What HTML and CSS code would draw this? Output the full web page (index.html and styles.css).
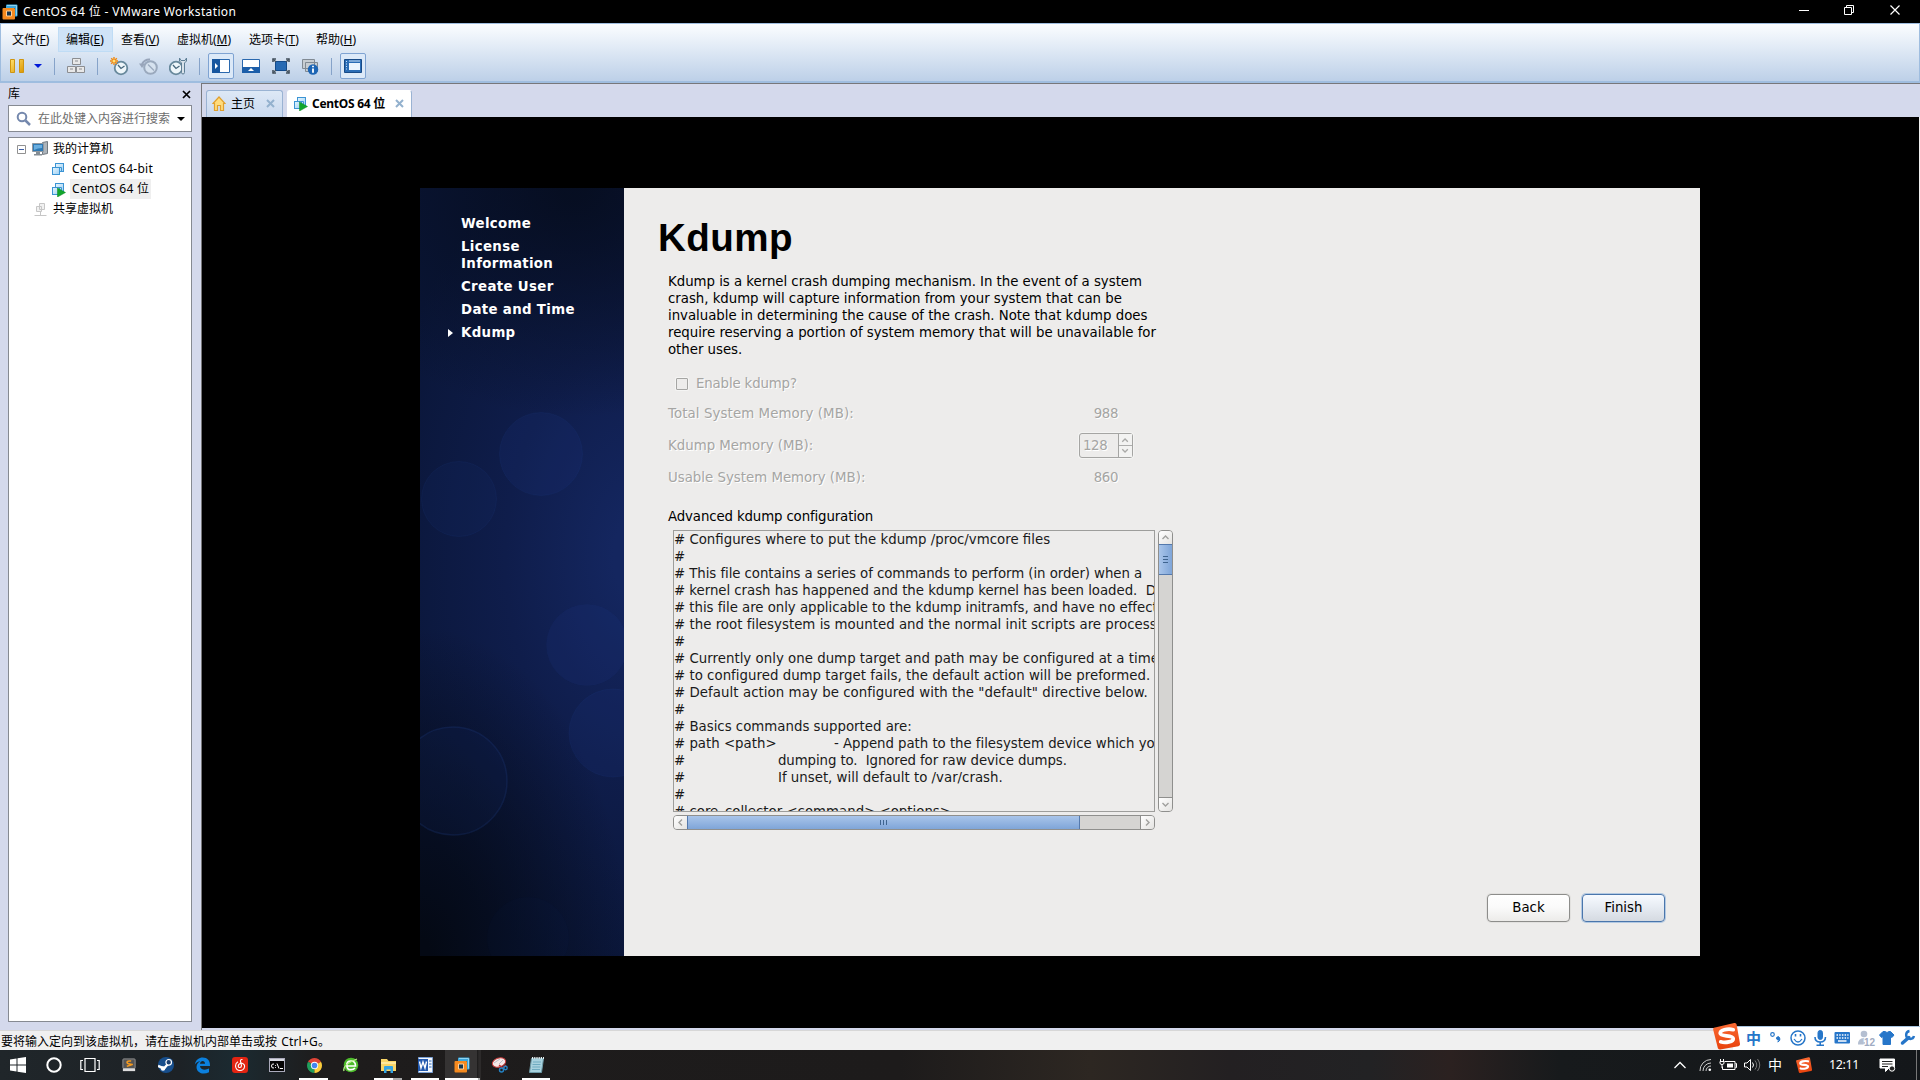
FILE: index.html
```html
<!DOCTYPE html>
<html lang="zh-CN">
<head>
<meta charset="utf-8">
<title>CentOS 64 位 - VMware Workstation</title>
<link rel="stylesheet" href="styles.css">
</head>
<body>
<svg class="defs" width="0" height="0">
  <defs>
    <linearGradient id="box" x1="0" y1="0" x2="1" y2="1"><stop offset="0" stop-color="#e6f6ff"/><stop offset="1" stop-color="#9fd0f2"/></linearGradient>
    <linearGradient id="gold" x1="0" y1="0" x2="1" y2="1"><stop offset="0" stop-color="#ffe070"/><stop offset="1" stop-color="#dc9700"/></linearGradient>
    <linearGradient id="red" x1="0" y1="0" x2="0" y2="1"><stop offset="0" stop-color="#fa6a33"/><stop offset="1" stop-color="#e8420c"/></linearGradient>
    <symbol id="vm" viewBox="0 0 15 15">
      <rect x="4.5" y="1.5" width="8" height="8" fill="url(#box)" stroke="#3c94d4"/>
      <rect x="1.5" y="5.500" width="7" height="7" fill="url(#box)" stroke="#3c94d4"/>
      <path d="M6.500 5.500h4v4" fill="none" stroke="#3c94d4"/>
    </symbol>
    <symbol id="vmrun" viewBox="0 0 15 15">
      <use href="#vm" width="15" height="15"/>
      <path d="M6.500 6v9l8-4.500z" fill="#12a62c" stroke="#0a8a20" stroke-width=".5"/>
    </symbol>
    <symbol id="vmware" viewBox="0 0 16 16">
      <path d="M4 1.500q0-1 1-1h9.500q1 0 1 1v10q0 1-1 1H13V4H4z" fill="#3ba6dc"/>
      <path d="M5 1.500h9.500v10" fill="none" stroke="#8fd4f2"/>
      <path d="M.5 5Q.5 4 1.500 4H12q1 0 1 1v9.500q0 1-1 1H1.500q-1 0-1-1z" fill="#f58a1f"/>
      <path d="M4.500 7h5v5h-5z" fill="#16364f" stroke="#ffd09a"/>
    </symbol>
    <symbol id="sogou" viewBox="0 0 28 28">
      <path d="M1 5.500L22 .5q2-.5 2.500 1.500L28 22q.2 2-1.700 2.500L7.500 28q-2 .3-2.500-1.500L.2 7.500Q0 5.700 1 5.500z" fill="url(#red)"/>
      <path d="M21 7.500C15 6 7 8 7.500 11.500c.5 3.300 13 1.300 13.500 5 .4 3.500-8 5-13 3.500" fill="none" stroke="#fff" stroke-width="3.800" stroke-linecap="round"/>
    </symbol>
    <symbol id="clock" viewBox="0 0 20 20">
      <circle cx="12" cy="12" r="6.300" fill="#eef6fa" stroke="#68899c" stroke-width="1.800"/>
      <path d="M9 9l3 3.500L15.500 10" fill="none" stroke="#46677c" stroke-width="1.300"/>
    </symbol>
  </defs>
</svg>

<header class="titlebar">
  <svg width="16" height="16"><use href="#vmware"/></svg>
  <h1>CentOS 64 位 - VMware Workstation</h1>
  <svg class="winbtns" width="110" height="23" viewBox="0 0 110 23" fill="none" stroke="#fff">
    <path d="M7 10.500h10M52.500 7.500h7v7h-7zM54.500 7.500v-2h7v7h-2" />
    <path d="M98.500 5.500l9 9M107.500 5.500l-9 9" stroke-width="1.200"/>
  </svg>
</header>

<div class="chrome">
  <nav class="menu">
    <span>文件(<u>F</u>)</span><span class="hot">编辑(<u>E</u>)</span><span>查看(<u>V</u>)</span><span>虚拟机(<u>M</u>)</span><span>选项卡(<u>T</u>)</span><span>帮助(<u>H</u>)</span>
  </nav>
  <div class="tools">
    <svg class="t-pause" width="34" height="20" viewBox="0 0 34 20"><path d="M1.500 3.500h4v13h-4zM10.500 3.500h4v13h-4z" fill="url(#gold)" stroke="#cf9510"/><path d="M25 8h8l-4 4z" fill="#0018d8"/></svg>
    <i class="sep"></i>
    <svg class="t-a" width="20" height="20" viewBox="0 0 20 20" fill="#e8e8e8" stroke="#8b8d91"><path d="M6.500 2.500h8v6h-8zM1.500 10.500h8v6h-8zM10.500 10.500h8v6h-8z"/><path d="M9 5h3M4 13h3M13 13h3" fill="none"/></svg>
    <i class="sep"></i>
    <svg class="t-a" width="20" height="20" viewBox="0 0 20 20"><use href="#clock" width="20" height="20"/><path d="M5 1v8M1 5h8M2.200 2.200l5.600 5.600M7.800 2.200L2.200 7.800" stroke="#f08810" stroke-width="1.400"/><circle cx="5" cy="5" r="1.500" fill="#ffe27a"/></svg>
    <svg class="t-b" width="20" height="20" viewBox="0 0 20 20" fill="none" stroke="#9aa9bd" stroke-width="2"><circle cx="11.500" cy="11.500" r="6.300" fill="#d6e2ef"/><path d="M9 8.500l3 3 3 3" stroke-width="1.300"/><path d="M3 8q3-5 8-4.500" stroke="#98a5ba"/><path d="M0 7.500h6L3 12z" fill="#98a5ba" stroke="none"/></svg>
    <svg class="t-b" width="20" height="20" viewBox="0 0 20 20"><use href="#clock" x="-5" y="0" width="20" height="20"/><path d="M10.500 2v3l2 2v9.500q0 1.500 1.500 1.500t1.500-1.500V7l2-2V2l-1.500 2.500h-4z" fill="#d8e2ea" stroke="#5e7e94"/></svg>
    <i class="sep"></i>
    <span class="on first"><svg width="20" height="16" viewBox="0 0 20 16"><path d="M1.500 1.500h17v13h-17z" fill="#fff" stroke="#2a68ae"/><path d="M1 1h8v14H1z" fill="#17569f"/><path d="M4 5v6l3-3z" fill="#fff"/></svg></span>
    <svg class="t-c" width="20" height="16" viewBox="0 0 20 16"><path d="M1.500 1.500h17v13h-17z" fill="#fff" stroke="#2a68ae"/><path d="M1 9h18v6H1z" fill="#1c5ea9"/><path d="M7 13h6l-3-3z" fill="#fff"/></svg>
    <svg class="t-b" width="20" height="20" viewBox="0 0 20 20"><path d="M4.500 5.500h11v9h-11z" fill="#276ab3" stroke="#124b8d"/><path d="M2 6V3h3M15 3h3v3M2 14v3h3M15 17h3v-3" fill="none" stroke="#46535f" stroke-width="1.600"/><path d="M2 3l3 3M18 3l-3 3M2 17l3-3M18 17l-3-3" stroke="#46535f" stroke-width="1.200"/></svg>
    <svg class="t-b" width="20" height="20" viewBox="0 0 20 20"><path d="M1.500 3.500h12v9h-12zM4.500 6.500h12v9h-12z" fill="#c7cdd2" stroke="#818a93"/><circle cx="12" cy="13.500" r="5.200" fill="#1d65b4"/><path d="M12 12.500v4.300M12 9.800v1.500" stroke="#fff" stroke-width="1.800"/></svg>
    <i class="sep"></i>
    <span class="on"><svg width="20" height="16" viewBox="0 0 20 16"><path d="M1.500 1.500h17v13h-17z" fill="#2a6cb5" stroke="#174a87"/><path d="M6 5h11v7H6z" fill="#eaf4ff"/><path d="M3 3.500h1M3 6h1M3 8.500h1M3 11h1M6 3h11" stroke="#cfe4fb"/></svg></span>
  </div>
</div>

<main>
  <aside class="library">
    <div class="lib-head"><span>库</span><svg width="9" height="9" viewBox="0 0 9 9"><path d="M1 1l7 7M8 1L1 8" stroke="#000" stroke-width="1.700"/></svg></div>
    <div class="search">
      <svg width="16" height="16" viewBox="0 0 16 16" fill="none" stroke="#7488ad"><circle cx="6" cy="6" r="4.300" stroke-width="2"/><path d="M9.500 9.500l4.500 4.500" stroke-width="2.500"/></svg>
      <span>在此处键入内容进行搜索</span><i></i>
    </div>
    <div class="tree">
      <div class="row r0"><svg class="minus" width="9" height="9" viewBox="0 0 9 9"><path d="M.5.5h8v8h-8z" fill="#fff" stroke="#919191"/><path d="M2 4.500h5" stroke="#3d5fa8"/></svg>
        <svg width="17" height="16" viewBox="0 0 17 16"><path d="M10.500 1.500l5-1v12l-5 1z" fill="#aeb5bb" stroke="#737b82"/><path d="M.5 2.500h11v8H.5z" fill="#2f7ab5" stroke="#9098a0"/><path d="M2 4h8v3q-4 0-8 2z" fill="#69aee0"/><path d="M4 11h4v2h2v1.500H2V13h2z" fill="#858d94"/></svg><span>我的计算机</span></div>
      <div class="row r1"><svg width="15" height="15"><use href="#vm"/></svg><span class="ls">CentOS 64-bit</span></div>
      <div class="row r1"><svg width="15" height="15"><use href="#vmrun"/></svg><span class="sel">CentOS 64 位</span></div>
      <div class="row r2"><svg width="13" height="15" viewBox="0 0 13 15" fill="#f1f1f1" stroke="#c6c6c6"><path d="M5.500 1.500h5v6h-5zM2.500 4.500h5v5h-5zM6.500 10v3M.5 13.500h12"/></svg><span>共享虚拟机</span></div>
    </div>
  </aside>

  <section class="work">
    <div class="tabs">
      <div class="tab home"><svg width="14" height="15" viewBox="0 0 14 15"><path d="M1 7.500L7 1l6 6.500h-1.500v7h-3v-5h-3v5h-3v-7z" fill="#ffdc7c" stroke="#e0a02e" stroke-width="1.200"/></svg><span>主页</span><svg class="x" width="9" height="9" viewBox="0 0 9 9"><path d="M1 1l7 7M8 1L1 8" stroke="#93b1ce" stroke-width="2"/></svg></div>
      <div class="tab active"><svg width="15" height="15"><use href="#vmrun"/></svg><b>CentOS 64 位</b><svg class="x" width="9" height="9" viewBox="0 0 9 9"><path d="M1 1l7 7M8 1L1 8" stroke="#93b1ce" stroke-width="2"/></svg></div>
    </div>
    <div class="screen">
      <div class="guest">
        <div class="steps">
          <svg class="bokeh" width="204" height="768" viewBox="0 0 204 768" fill="#203a86" stroke="#2a4a9c">
            <g fill-opacity=".16" stroke-opacity=".1"><circle cx="121" cy="266" r="41.500"/><circle cx="39" cy="311" r="37.500" fill-opacity=".1"/><circle cx="167" cy="457" r="40.500" stroke-opacity=".04"/><circle cx="193" cy="545" r="44"/><circle cx="33" cy="593" r="54" fill-opacity=".1" stroke-opacity=".2" stroke-width="1.500"/><circle cx="108" cy="750" r="41" fill-opacity=".04" stroke="none"/></g>
          </svg>
          <ul><li>Welcome</li><li>License<br>Information</li><li>Create User</li><li>Date and Time</li><li class="cur">Kdump</li></ul>
        </div>
        <div class="page">
          <h2>Kdump</h2>
          <div class="body">
            <p>Kdump is a kernel crash dumping mechanism. In the event of a system<br>crash, kdump will capture information from your system that can be<br>invaluable in determining the cause of the crash. Note that kdump does<br>require reserving a portion of system memory that will be unavailable for<br>other uses.</p>
            <label class="dis check"><i></i>Enable kdump?</label>
            <div class="dis mem m1"><span>Total System Memory (MB):</span><em>988</em></div>
            <div class="dis mem m2"><span>Kdump Memory (MB):</span>
              <div class="spin"><b>128</b><svg width="14" height="23" viewBox="0 0 14 23" fill="none" stroke="#a9a9a7"><path d="M0 11.500h14"/><path d="M3.500 7.500l3-3 3 3M3.500 15.500l3 3 3-3" stroke-width="1.400"/></svg></div></div>
            <div class="dis mem m3"><span>Usable System Memory (MB):</span><em>860</em></div>
            <div class="adv">Advanced kdump configuration</div>
            <div class="editor">
<pre class="text"># Configures where to put the kdump /proc/vmcore files
#
<span class="n2"># This file contains a series of commands to perform (in order) when a</span>
<span class="n1"># kernel crash has happened and the kdump kernel has been loaded.  Directives in</span>
<span class="n1"># this file are only applicable to the kdump initramfs, and have no effect once</span>
<span class="p1"># the root filesystem is mounted and the normal init scripts are processed</span>
#
<span class="p1"># Currently only one dump target and path may be configured at a time</span>
<span class="p1"># to configured dump target fails, the default action will be preformed.</span>
<span class="p2"># Default action may be configured with the "default" directive below.</span>
#
# Basics commands supported are:
<span class="c1"># path &lt;path&gt;</span><span class="n1">- Append path to the filesystem device which you are</span>
<span class="c2">#</span><span class="n3">dumping to.  Ignored for raw device dumps.</span>
<span class="c2">#</span>If unset, will default to /var/crash.
#
# core_collector &lt;command&gt; &lt;options&gt;</pre>
              <div class="sb v"><i class="btn"><svg width="9" height="9" viewBox="0 0 9 9"><path d="M1.500 6l3-3 3 3"/></svg></i><i class="thumb"><svg width="9" height="9" viewBox="0 0 9 9"><path d="M2 1.500h5M2 4.500h5M2 7.500h5"/></svg></i><i class="btn end"><svg width="9" height="9" viewBox="0 0 9 9"><path d="M1.500 3l3 3 3-3"/></svg></i></div>
              <div class="sb h"><i class="btn"><svg width="9" height="9" viewBox="0 0 9 9"><path d="M6 1.500l-3 3 3 3"/></svg></i><i class="thumb"><svg width="9" height="9" viewBox="0 0 9 9"><path d="M1.500 2v5M4.500 2v5M7.500 2v5"/></svg></i><i class="btn end"><svg width="9" height="9" viewBox="0 0 9 9"><path d="M3 1.500l3 3-3 3"/></svg></i></div>
            </div>
          </div>
          <div class="actions"><button>Back</button><button class="pri">Finish</button></div>
        </div>
      </div>
    </div>
  </section>
</main>

<footer class="status">要将输入定向到该虚拟机，请在虚拟机内部单击或按 <span>Ctrl+G。</span></footer>

<div class="taskbar">
  <div class="apps">
    <span><svg width="18" height="18" viewBox="0 0 18 18" fill="#fff"><path d="M1 3.500l6.500-1v6H1zM8.500 2.300L17 1v7.500H8.500zM1 9.500h6.500v6L1 14.600zM8.500 9.500H17V17l-8.500-1.300z"/></svg></span>
    <span><svg width="18" height="18" viewBox="0 0 18 18"><circle cx="9" cy="9" r="6.700" fill="none" stroke="#fff" stroke-width="2"/></svg></span>
    <span><svg width="20" height="18" viewBox="0 0 20 18" fill="none" stroke="#fff" stroke-width="1.200"><path d="M5 2.500h10v13H5zM3 4.500H.8v9H3M17 4.500h2.200v9H17"/></svg></span>
    <span class="sh"><svg width="14" height="14" viewBox="0 0 16 16"><rect x="1" y="1" width="14" height="11" rx="1" fill="#555" stroke="#999"/><rect x="1" y="12" width="14" height="3" fill="#ddd"/><path d="M10.500 3.500Q5.500 3 5.700 5t4.600 2-4.800 2.500" fill="none" stroke="#f49a20" stroke-width="1.700"/></svg></span>
    <span class="sh"><svg width="16" height="16" viewBox="0 0 16 16"><circle cx="8" cy="8" r="8" fill="#174e8c"/><path d="M0 9l6 2.500L9 8l2-2" stroke="#fff" stroke-width="2.500" fill="none"/><circle cx="10.700" cy="5.300" r="2.800" fill="#1a3f70" stroke="#fff" stroke-width="1.200"/><circle cx="5" cy="11.500" r="2.200" fill="#fff"/></svg></span>
    <span class="sh"><svg width="17" height="17" viewBox="0 0 17 17"><path d="M.8 7.500C2 2.500 5 .5 8.700.5c5 0 7.500 3.500 7.300 8.500H6c.3 4 5.500 4.500 9 2.500v3.800c-6 3-12.500.5-12.500-5.300C2.500 7 4.500 5 6.500 4.200 4 4.500 2 5.500.8 7.500zM6 6.700h5C11 3 6.500 3 6 6.700z" fill="#0b80de"/></svg></span>
    <span class="sh"><svg width="16" height="16" viewBox="0 0 16 16"><rect width="16" height="16" rx="3" fill="#e32412"/><path d="M10.500 2.500q-2.500-.3-2 2l1 4q0 2-1.700 2T6.300 9q-.2-2 3-3 3.500 1 3.300 3.500Q12 13.500 8 13.500T3.500 9Q3.500 6 6 4.700" fill="none" stroke="#fff" stroke-width="1.100"/></svg></span>
    <span class="sh"><svg width="16" height="14" viewBox="0 0 16 14"><rect x=".5" y=".5" width="15" height="13" fill="#050505" stroke="#aab"/><path d="M1 1h14v2H1z" fill="#d7dae2"/><path d="M5 6Q2.500 5.500 2.500 8T5 10M6.500 7v.8M6.500 9v.8M8 5.500l2 5M11 10.500h3" fill="none" stroke="#fff"/></svg></span>
    <span class="sh run"><svg width="15" height="15" viewBox="0 0 16 16"><path d="M8 8L1.100 4A8 8 0 0114.900 4z" fill="#df4437"/><path d="M8 8L1.100 4A8 8 0 008 16z" fill="#209d5c"/><path d="M8 8l6.900-4A8 8 0 018 16z" fill="#fbcc3c"/><circle cx="8" cy="8" r="3.900" fill="#fff"/><circle cx="8" cy="8" r="3" fill="#4385f0"/></svg></span>
    <span class="sh"><svg width="16" height="16" viewBox="0 0 16 16"><circle cx="8" cy="8" r="7.300" fill="#4dbb2b"/><path d="M3.500 9h9Q12.500 4 8 4T3.800 8.500 8 12.700q2.500 0 4-1.700" fill="none" stroke="#fff" stroke-width="1.700"/><path d="M1 14Q-1 8 14 2" fill="none" stroke="#b6ed84" stroke-width="1.300"/></svg></span>
    <span class="sh run stack"><svg width="17" height="15" viewBox="0 0 17 15"><path d="M1 1h6l1.500 2H16v10H1z" fill="#f9d567"/><path d="M1 4h15v2H1z" fill="#ffe89c"/><path d="M4 15V9q0-1 1-1h7q1 0 1 1v6h-2.500v-3.500h-4V15z" fill="#33a4e4"/></svg></span>
    <span class="sh run"><svg width="16" height="16" viewBox="0 0 16 16"><path d="M1.500.500h14v15h-14z" fill="#f4f8fd" stroke="#7ba0d4"/><path d="M1 2h10v12H1z" fill="#2259ae"/><path d="M2.500 4.500L4 11l2-6 2 6 1.500-6.500" fill="none" stroke="#fff" stroke-width="1.400"/><path d="M12 4h2.500M12 7h2.500M12 10h2.500" stroke="#2f67b5"/></svg></span>
    <span class="sh run focus"><svg width="16" height="16"><use href="#vmware"/></svg></span>
    <span class="sh"><svg width="17" height="16" viewBox="0 0 17 16"><ellipse cx="8" cy="5.500" rx="6.800" ry="4.500" fill="#f5e8e8" stroke="#c93c3c" transform="rotate(-18 8 5.500)"/><path d="M3 6l6-4M8 7l4-4" stroke="#b9bcc2"/><path d="M8 8l4 3 3-3" fill="none" stroke="#c23030" stroke-width="1.500"/><circle cx="10.500" cy="13" r="2" fill="none" stroke="#2583c5" stroke-width="1.400"/><circle cx="14.500" cy="11" r="1.700" fill="none" stroke="#2583c5" stroke-width="1.400"/></svg></span>
    <span class="sh run"><svg width="15" height="16" viewBox="0 0 15 16"><path d="M2.500 1.500h12l-2 14H.5z" fill="#a9d2de" stroke="#6d99a6"/><path d="M3 1h12" stroke="#e9f2f4" stroke-width="2" stroke-dasharray="1.200 1"/><path d="M4 5h8M3.500 7.500h8M3.300 10h8M3 12.500h8" stroke="#6fabc0"/></svg></span>
  </div>
  <div class="tray">
    <svg width="246" height="30" viewBox="0 0 246 30" fill="none" stroke="#fff">
      <path d="M.5 18l5.500-5.500 5.500 5.500" stroke-width="1.300"/>
      <path d="M26 21A11 11 0 0137 9.500M29 21a8 8 0 018-8M32 21a5 5 0 015-5" stroke="#ccc"/><circle cx="35.800" cy="19.800" r="1.300" fill="#fff" stroke="none"/>
      <path d="M50.500 11.500h10.500v8H48.500v-3M61.500 13.500h1v4h-1"/><path d="M53 13.500h6v4h-6z" fill="#fff" stroke="none"/><path d="M46.500 9v2M49.500 9v2M46 11.500h4v1.500q0 1.500-2 1.500t-2-1.500zM48 14v4"/>
      <path d="M70.500 13h2.500l3.500-3.500v11L73 17h-2.500zM78.500 12.500q2 2.500 0 5"/><path d="M81 10.500q3.500 4.500 0 9M83.500 9q4.500 6 0 12" stroke="#777"/>
      <path d="M206 9h14.500v9H215l-3.500 3.500V18H206z" fill="#fff"/><path d="M208 11.500h10.500M208 14h10.500M208 16.500h6" stroke="#222"/><circle cx="218" cy="18.500" r="2.700" fill="#222" stroke="#fff"/>
      <path d="M242.500 0v30" stroke="#777"/>
    </svg>
    <span class="zh">中</span><svg class="s" width="16" height="16"><use href="#sogou"/></svg><time>12:11</time>
  </div>
</div>

<div class="ime">
  <svg class="logo" width="27" height="28"><use href="#sogou"/></svg>
  <b>中</b>
  <svg width="160" height="22" viewBox="0 0 160 22" fill="#2676c9" stroke="#2676c9">
    <circle cx="4.500" cy="7.500" r="1.800" fill="none" stroke-width="1.200"/><path d="M11.500 10.500a1.600 1.600 0 10-.3 2q0 1.500-1.500 2.500 3-1.200 1.800-4.500z"/>
    <circle cx="30" cy="11" r="7" fill="none" stroke-width="1.500"/><path d="M26 12q4 6 8 0" fill="none" stroke-width="1.300"/><path d="M27.500 7v2.500M32.500 7v2.500" stroke-width="1.600"/>
    <rect x="50" y="3.500" width="4.500" height="9" rx="2.200"/><path d="M47 10q0 5 5.200 5t5.300-5M52.200 15v3M48.500 18.300h7.500" fill="none" stroke-width="1.600"/>
    <rect x="66.500" y="5" width="15.500" height="11.500" rx="1" stroke="none"/><path d="M68.500 8h12M68.500 11h12" stroke="#fff" stroke-width="1.500" stroke-dasharray="1.500 1.200"/><path d="M70 14h8.500" stroke="#fff" stroke-width="1.500"/>
    <g fill="#b4bfd1" stroke="none"><circle cx="96" cy="7" r="3.300"/><path d="M90 17.500q0-6.500 6-6.500h1v6.500z"/></g><text x="96" y="18.500" class="n12">12</text>
    <path d="M115 4.500L111.500 8l2 2.500 1.500-1v8h7.500v-8l1.500 1 2-2.500-3.500-3.500H121q-2 2-4 0z"/>
    <path d="M134.500 16l6.300-5.500" stroke-width="3.500" stroke-linecap="round"/><path d="M146 9a4 4 0 11-4.500-5" fill="none" stroke-width="2.400"/>
  </svg>
</div>
</body>
</html>
```
FILE: styles.css
```css
* { box-sizing: border-box; }
body {
  margin: 0; width: 1920px; height: 1080px; overflow: hidden; position: relative;
  display: flex; flex-direction: column; background: #000; color: #000;
  font: 12px/16px "Noto Sans", "Noto Sans CJK SC", sans-serif;
}
svg { display: block; flex: none; }
.defs { position: absolute; }
h1, h2, p, ul, pre { margin: 0; padding: 0; }
h1 { font-weight: normal; }
i, em { font-style: normal; }

.titlebar { height: 23px; flex: none; display: flex; align-items: center; padding: 0 18px 0 2px; color: #fff; }
.titlebar h1 { font-size: 12px; letter-spacing: .37px; margin-left: 5px; }
.winbtns { margin-left: auto; }

.chrome {
  height: 60px; flex: none; border: solid #9fbddf; border-width: 1px 1px 2px;
  background: linear-gradient(#fbfdff, #dfe9f5 45%, #bdd0e8);
}
.menu { display: grid; grid-template-columns: 54px 55px 56px 72px 67px 60px; padding: 3px 0 0 3px; height: 28px; }
.menu span { height: 25px; line-height: 24px; padding-left: 7px; white-space: nowrap; border: 1px solid transparent; }
.menu .hot { background: #cfe3f7; border-color: #bfdcf5; }
.tools { display: flex; align-items: center; height: 28px; padding-left: 8px; }
.sep { width: 1px; height: 17px; background: #86a3c9; }
.t-pause { margin-right: 11px; }
.t-a { margin: 0 10px 0 11px; }
.t-a + .sep { margin-left: 1px; }
.t-b { margin-left: 10px; }
.t-b + .sep { margin-left: 10px; }
.t-c { margin-left: 7px; }
.on { width: 26px; height: 26px; margin-left: 8px; border: 1px solid #7fa3d2; background: #dce9f8; border-radius: 2px; display: grid; place-items: center; }
.tools .t-a + .t-b { margin-left: 0; }

main { flex: none; height: 947px; display: flex; }
.library { width: 201px; background: #d4d9ec; padding: 0 9px 8px 8px; display: flex; flex-direction: column; }
.lib-head { display: flex; justify-content: space-between; align-items: center; height: 22px; padding-right: 1px; }
.search { height: 27px; flex: none; border: 1px solid #868a92; background: #fff; display: flex; align-items: center; padding-left: 7px; color: #6d6d6d; }
.search span { margin-left: 6px; }
.search i { margin-left: 7px; border: solid transparent; border-width: 4px 4px 0; border-top-color: #000; }
.tree { margin-top: 5px; flex: 1; border: 1px solid #868a92; background: #fff; padding-top: 1px; }
.row { display: flex; align-items: center; height: 20px; }
.r0 { padding-left: 8px; }
.r0 .minus { margin-right: 6px; }
.r0 span { margin-left: 4px; }
.r1 { padding-left: 42px; }
.r1 span { margin-left: 4px; padding: 0 2px; height: 20px; line-height: 20px; letter-spacing: .3px; }
.r1 .ls { letter-spacing: .27px; }
.sel { background: #efefef; }
.r2 { padding-left: 25px; }
.r2 span { margin-left: 6px; }

.work { flex: 1; border: solid #77777a; border-width: 1px 0 0 1px; background: #d4d9ec; display: flex; flex-direction: column; }
.tabs { height: 33px; display: flex; align-items: flex-end; padding-left: 4px; gap: 4px; }
.tab { height: 27px; border: 1px solid #9ab3d3; border-bottom: 0; border-radius: 3px 3px 0 0; display: flex; align-items: center; padding: 0 7px 1px 5px; }
.home { width: 77px; background: linear-gradient(#dde8f6, #c9d9ee); }
.active { width: 125px; background: #fff; border-color: #fff #9ab3d3 #fff #fff; }
.tab span { margin-left: 5px; }
.tab b { margin-left: 4px; letter-spacing: -.27px; }
.tab .x { margin-left: auto; }
.screen { flex: 1; background: #000; border-right: 1px solid #f0f0f0; margin-bottom: 2px; padding: 71px 0 0 218px; }
.guest { width: 1280px; height: 768px; display: flex; font: 13.333px/17px "DejaVu Sans", sans-serif; background: #edeceb; }
.steps {
  width: 204px; position: relative; color: #fff; font-weight: bold;
  background:
    radial-gradient(ellipse 210px 330px at 0 100%, #040914 5%, rgba(4,9,20,0) 100%),
    radial-gradient(ellipse 270px 230px at 75% 0, rgba(6,13,31,.9) 5%, rgba(6,13,31,0) 100%),
    radial-gradient(ellipse 270px 430px at 108% 48%, #14265f 10%, #0f1d4b 50%, #0a1638 100%);
}
.bokeh { position: absolute; left: 0; top: 0; }
.steps ul { position: relative; list-style: none; padding: 27px 0 0 41px; display: flex; flex-direction: column; gap: 6px; letter-spacing: .34px; }
.cur::before { content: ""; position: absolute; left: 28px; margin-top: 5px; border: solid transparent; border-width: 4px 0 4px 5px; border-left-color: #fff; }
.page { flex: 1; display: flex; flex-direction: column; padding: 25px 35px 34px 34px; }
.page h2 { font: bold 38.600px/50px "Liberation Sans", sans-serif; letter-spacing: .4px; }
.body { padding: 10px 0 0 10px; flex: 1; }
.body p { white-space: nowrap; letter-spacing: -.03px; }
.dis { color: #a5a5a3; text-shadow: 1px 1px #fff; display: flex; align-items: center; }
.check { height: 17px; margin: 17px 0 0 8px; letter-spacing: -.15px; }
.check i { width: 12px; height: 12px; border: 1px solid #a5a5a3; border-radius: 1px; margin-right: 8px; box-shadow: 0 0 0 1px #f5f5f4; }
.mem { height: 32px; justify-content: space-between; width: 465px; letter-spacing: .1px; }
.m2 span, .m3 span { letter-spacing: 0; }
.mem em { margin-right: 15px; letter-spacing: -.4px; }
.m1 { margin-top: 5px; }
.spin { width: 54px; height: 25px; border: 1px solid #a5a5a3; border-radius: 3px; display: flex; align-items: center; justify-content: space-between; box-shadow: 0 0 0 1px #f4f4f3; }
.spin b { font-weight: normal; padding-left: 3px; letter-spacing: -.4px; }
.spin svg { border-left: 1px solid #a5a5a3; background: #f3f3f2; }
.adv { margin-top: 15px; letter-spacing: -.13px; }
.editor { display: grid; grid-template: 282px 15px / 482px 15px; gap: 3px; margin: 5px 0 0 5px; }
.text { border: 1px solid #9d9d9b; font: inherit; color: #1a1a1a; overflow: hidden; white-space: pre; }
.n1 { letter-spacing: -.04px; }
.n2 { letter-spacing: -.07px; }
.n3 { letter-spacing: -.1px; }
.p1 { letter-spacing: .02px; }
.p2 { letter-spacing: .06px; }
.c1, .c2 { display: inline-block; width: 160px; }
.c2 { width: 104px; }
.sb { display: flex; background: #d5d4d2; border: 1px solid #8f8f8d; border-radius: 4px; overflow: hidden; }
.v { flex-direction: column; }
.btn, .thumb { display: grid; place-items: center; background: linear-gradient(135deg, #fff, #e4e3e1); }
.btn svg, .thumb svg { fill: none; stroke: #a0a09e; stroke-width: 1.400; }
.v .btn { height: 14px; border-bottom: 1px solid #8f8f8d; }
.v .thumb { height: 29px; background: linear-gradient(90deg, #a9c5ea, #7fa5d8); box-shadow: 0 0 0 1px #5479ad; }
.h .btn { width: 14px; border-right: 1px solid #8f8f8d; }
.h .thumb { width: 391px; background: linear-gradient(#a9c5ea, #7fa5d8); box-shadow: 0 0 0 1px #5479ad; }
.thumb svg { stroke: #3f648f; stroke-width: 1; }
.v .end { margin-top: auto; border-width: 1px 0 0; border-top: 1px solid #8f8f8d; }
.h .end { margin-left: auto; border-right: 0; border-left: 1px solid #8f8f8d; }
.actions { display: flex; justify-content: flex-end; gap: 12px; }
.actions button { width: 83px; height: 28px; padding: 0 0 1px; font: inherit; border: 1px solid #8d8d8b; border-radius: 4px; background: linear-gradient(#fff, #fafafa 48%, #ecebe9); box-shadow: 0 0 0 1px #e2e1df; }
.actions .pri { border-color: #4a76ac; background: linear-gradient(#f7faff, #e6ebf2 48%, #d5dae1); box-shadow: 0 0 0 1px #b3c9e2; }

.status { height: 20px; flex: none; background: #f0f0f0; border-top: 1px solid #d7d7d7; line-height: 22px; padding-left: 1px; }
.status span { letter-spacing: .2px; margin-left: 1px; }

.taskbar { height: 30px; flex: none; display: flex; justify-content: space-between; background: linear-gradient(90deg, #20262a 0, #1d2226 180px, #1b2a31 235px, #1e1c1c 320px, #1d1b1b 900px, #2d2722 1090px, #232022 1230px, #222224 1370px, #2b2120 1450px, #171a1c 1560px, #14171a); }
.apps { display: flex; }
.apps span { width: 36px; display: grid; place-items: center; position: relative; }
.apps .sh { width: 37.100px; }
.apps span:nth-child(4) { margin-left: 2px; }
.run::after { content: ""; position: absolute; left: 4px; right: 5px; bottom: 0; height: 2px; background: #fff; }
.stack::after { background: linear-gradient(90deg, #fff 19px, #aaa 19px); }
.focus { background: linear-gradient(90deg, transparent 1px, #353333 1px, #353333 33px, #1a1919 33px, #2c2a2a 35px); }
.focus::after { left: 1px; right: 1px; background: linear-gradient(90deg, #fff 33px, #aaa 33px); }
.tray { width: 246px; position: relative; color: #fff; }
.tray .zh, .tray .s, .tray time { position: absolute; top: 7px; }
.tray .zh { left: 94px; font-size: 14px; }
.tray .s { left: 122px; }
.tray time { left: 155px; font-size: 12.500px; letter-spacing: -.4px; }

.ime { position: absolute; left: 1713px; top: 1022px; width: 207px; height: 28px; display: flex; align-items: center; padding-top: 4px; background: linear-gradient(#a9c5e0, #a9c5e0) 24px 4px / 183px 1px no-repeat, linear-gradient(90deg, transparent 20px, #fff 20px) 0 4px no-repeat; }
.ime .logo { margin-top: -4px; }
.ime b { margin: 0 7px 0 6px; font-size: 15px; font-weight: 600; color: #2676c9; }
.n12 { font: bold 10px "Liberation Sans", sans-serif; fill: #9fabc2; stroke: #fff; stroke-width: 2px; paint-order: stroke; }
```
